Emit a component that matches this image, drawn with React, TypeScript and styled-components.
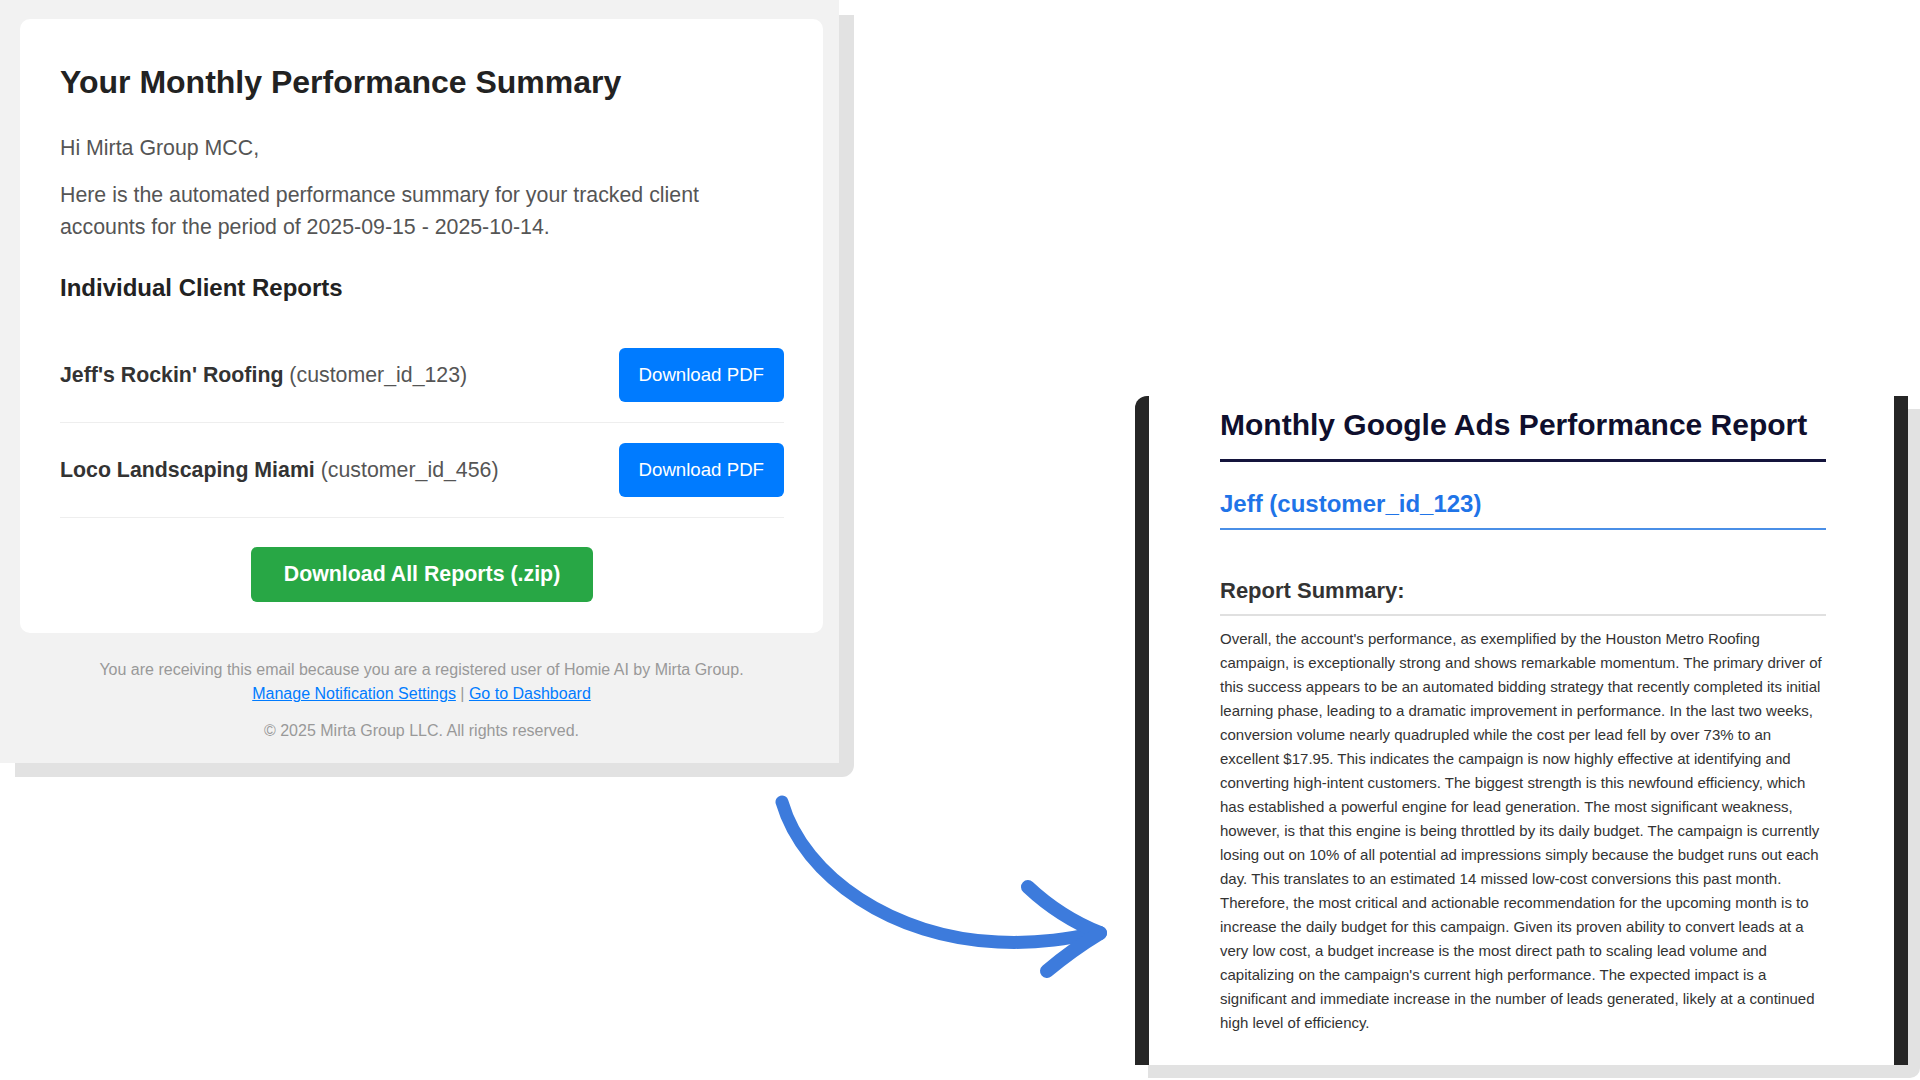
import React from 'react';
import styled, { createGlobalStyle } from 'styled-components';

const GlobalStyle = createGlobalStyle`
  html, body {
    margin: 0;
    padding: 0;
    background: #ffffff;
  }
  body {
    font-family: 'Liberation Sans', Arial, Helvetica, sans-serif;
  }
`;

const clients = [
  { name: "Jeff's Rockin' Roofing", id: 'customer_id_123' },
  { name: 'Loco Landscaping Miami', id: 'customer_id_456' },
];

const summary =
  "Overall, the account's performance, as exemplified by the Houston Metro Roofing campaign, is exceptionally strong and shows remarkable momentum. The primary driver of this success appears to be an automated bidding strategy that recently completed its initial learning phase, leading to a dramatic improvement in performance. In the last two weeks, conversion volume nearly quadrupled while the cost per lead fell by over 73% to an excellent $17.95. This indicates the campaign is now highly effective at identifying and converting high-intent customers. The biggest strength is this newfound efficiency, which has established a powerful engine for lead generation. The most significant weakness, however, is that this engine is being throttled by its daily budget. The campaign is currently losing out on 10% of all potential ad impressions simply because the budget runs out each day. This translates to an estimated 14 missed low-cost conversions this past month. Therefore, the most critical and actionable recommendation for the upcoming month is to increase the daily budget for this campaign. Given its proven ability to convert leads at a very low cost, a budget increase is the most direct path to scaling lead volume and capitalizing on the campaign's current high performance. The expected impact is a significant and immediate increase in the number of leads generated, likely at a continued high level of efficiency.";

const CurvedArrow = () => (
  <ArrowSvg width="360" height="200" viewBox="0 0 360 200" fill="none">
    <path
      d="M22 12 C 44 88 135 148 238 152 C 280 154 312 148 336 143"
      stroke="#3d7bdc"
      strokeWidth="13"
      strokeLinecap="round"
    />
    <path d="M268 97 Q 300 127 340 143" stroke="#3d7bdc" strokeWidth="14" strokeLinecap="round" />
    <path d="M340 143 Q 312 160 287 181" stroke="#3d7bdc" strokeWidth="14" strokeLinecap="round" />
  </ArrowSvg>
);

export default function App() {
  return (
    <>
      <GlobalStyle />
      <Page>
        <EmailPanel>
          <EmailCard>
            <Title>Your Monthly Performance Summary</Title>
            <Greeting>Hi Mirta Group MCC,</Greeting>
            <Intro>
              Here is the automated performance summary for your tracked client accounts for the period of
              2025-09-15 - 2025-10-14.
            </Intro>
            <SectionTitle>Individual Client Reports</SectionTitle>
            {clients.map((c) => (
              <ClientRow key={c.id}>
                <ClientName>
                  <strong>{c.name}</strong> ({c.id})
                </ClientName>
                <PdfButton>Download PDF</PdfButton>
              </ClientRow>
            ))}
            <ZipWrap>
              <ZipButton>Download All Reports (.zip)</ZipButton>
            </ZipWrap>
          </EmailCard>
          <Footer>
            <FooterLine>You are receiving this email because you are a registered user of Homie AI by Mirta Group.</FooterLine>
            <FooterLine>
              <FooterLink href="#">Manage Notification Settings</FooterLink> | <FooterLink href="#">Go to Dashboard</FooterLink>
            </FooterLine>
            <Copyright>© 2025 Mirta Group LLC. All rights reserved.</Copyright>
          </Footer>
        </EmailPanel>

        <CurvedArrow />

        <ReportPage>
          <ReportTitle>Monthly Google Ads Performance Report</ReportTitle>
          <ClientHeading>Jeff (customer_id_123)</ClientHeading>
          <SummaryHeading>Report Summary:</SummaryHeading>
          <SummaryText>{summary}</SummaryText>
        </ReportPage>
      </Page>
    </>
  );
}

const Page = styled.div`
  position: relative;
  isolation: isolate;
  width: 1920px;
  height: 1080px;
  overflow: hidden;
  display: flex;
  justify-content: space-between;
  align-items: flex-start;
`;

const EmailPanel = styled.div`
  position: relative;
  box-sizing: border-box;
  width: 839px;
  padding: 19px 16px 20px 20px;
  background: #f2f2f2;
  &::before {
    content: '';
    position: absolute;
    top: 15px;
    left: 15px;
    right: -15px;
    bottom: -14px;
    background: #e2e2e2;
    border-radius: 0 0 12px 0;
    z-index: -1;
  }
`;

const EmailCard = styled.div`
  background: #ffffff;
  border-radius: 10px;
  padding: 44px 39px 31px 40px;
`;

const Title = styled.h1`
  margin: 0 0 31px;
  font-size: 32px;
  line-height: 38px;
  font-weight: 700;
  color: #222222;
`;

const Greeting = styled.p`
  margin: 0 0 15px;
  font-size: 21.33px;
  line-height: 32px;
  color: #555555;
`;

const Intro = styled(Greeting)`
  margin-bottom: 30px;
`;

const SectionTitle = styled.h2`
  margin: 0 0 25px;
  font-size: 24px;
  line-height: 30px;
  font-weight: 700;
  color: #222222;
`;

const ClientRow = styled.div`
  display: flex;
  justify-content: space-between;
  align-items: center;
  padding: 20px 0;
  border-bottom: 1px solid #eeeeee;
`;

const ClientName = styled.span`
  font-size: 21.33px;
  line-height: 30px;
  color: #555555;
  strong {
    color: #333333;
    font-weight: 700;
  }
`;

const PdfButton = styled.a`
  display: inline-block;
  padding: 16px 20px;
  background: #007bff;
  color: #ffffff;
  border-radius: 6px;
  font-size: 18.67px;
  line-height: 22px;
  text-decoration: none;
`;

const ZipWrap = styled.div`
  display: flex;
  justify-content: center;
  margin-top: 29px;
`;

const ZipButton = styled.a`
  display: inline-block;
  padding: 15px 33px;
  background: #28a745;
  color: #ffffff;
  border-radius: 6px;
  font-size: 21.33px;
  line-height: 25px;
  font-weight: 700;
  text-decoration: none;
`;

const Footer = styled.div`
  margin-top: 25px;
  text-align: center;
  font-size: 16px;
  line-height: 24px;
  color: #999999;
`;

const FooterLine = styled.div``;

const FooterLink = styled.a`
  color: #007bff;
  text-decoration: underline;
`;

const Copyright = styled.div`
  margin-top: 13px;
`;

const ArrowSvg = styled.svg`
  position: absolute;
  left: 760px;
  top: 790px;
`;

const ReportPage = styled.div`
  position: relative;
  align-self: flex-end;
  box-sizing: border-box;
  width: 773px;
  margin: 0 12px 15px 0;
  padding: 11px 68px 30px 71px;
  background: #ffffff;
  border-left: 14px solid #262626;
  border-right: 14px solid #262626;
  border-top-left-radius: 12px;
  &::before {
    content: '';
    position: absolute;
    top: 13px;
    left: -1px;
    right: -26px;
    bottom: -13px;
    background: #e2e2e2;
    border-radius: 0 0 10px 0;
    z-index: -1;
  }
`;

const ReportTitle = styled.h1`
  margin: 0;
  padding-bottom: 16px;
  border-bottom: 3px solid #14143c;
  font-size: 30px;
  line-height: 36px;
  font-weight: 700;
  color: #0f0f2d;
`;

const ClientHeading = styled.h2`
  margin: 27px 0 0;
  padding-bottom: 10px;
  border-bottom: 2px solid #4a8fe7;
  font-size: 24px;
  line-height: 29px;
  font-weight: 700;
  color: #1f74e8;
`;

const SummaryHeading = styled.h3`
  margin: 47px 0 0;
  padding-bottom: 10px;
  border-bottom: 2px solid #e0e0e0;
  font-size: 22px;
  line-height: 27px;
  font-weight: 700;
  color: #333333;
`;

const SummaryText = styled.p`
  margin: 11px 0 0;
  font-size: 15px;
  line-height: 24px;
  color: #333333;
`;
